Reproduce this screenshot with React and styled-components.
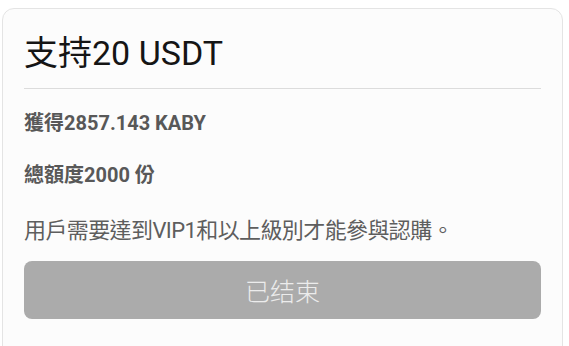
import React from 'react';
import styled, { createGlobalStyle } from 'styled-components';

const GlobalStyle = createGlobalStyle`
    html, body {
        margin: 0;
        padding: 0;
        background: #fff;
    }
    body {
        font-family: Roboto, "Noto Sans CJK TC", "Noto Sans CJK SC", sans-serif;
    }
`;

const App = () => {
    return (
        <>
            <GlobalStyle />
            <Page>
                <Card>
                    <Title>支持20 USDT</Title>
                    <Divider />
                    <Info top={20}>獲得2857.143 KABY</Info>
                    <Info top={24}>總額度2000 份</Info>
                    <Notice>用戶需要達到VIP1和以上級別才能參與認購。</Notice>
                    <EndedButton type="button" disabled>
                        已结束
                    </EndedButton>
                </Card>
            </Page>
        </>
    )
}

export default App;

// card wrapper

const Page = styled.div`
    padding: 8px 6px 0 2px;
    height: 346px;
    box-sizing: border-box;
    overflow: hidden;
`;

const Card = styled.div`
    background: #fcfcfc;
    border: 1px solid #e4e4e4;
    border-radius: 12px;
    padding: 22px 21px 40px;
    display: flex;
    flex-direction: column;
`;

const Title = styled.h2`
    margin: 0;
    font-size: 34px;
    line-height: 44px;
    font-weight: 400;
    color: #151515;
`;

const Divider = styled.div`
    height: 1px;
    background: #dcdcdc;
    margin-top: 13px;
`;

const Info = styled.div`
    margin-top: ${props => props.top}px;
    font-size: 20px;
    line-height: 28px;
    font-weight: 700;
    color: #585858;
`;

const Notice = styled.p`
    margin: 27px 0 0;
    font-size: 22px;
    line-height: 30px;
    font-weight: 400;
    color: #5e5e5e;
    letter-spacing: -0.6px;
`;

const EndedButton = styled.button`
    margin-top: 15px;
    height: 58px;
    border: none;
    border-radius: 8px;
    background: #ababab;
    color: #ececec;
    font-family: inherit;
    font-size: 25px;
    font-weight: 300;
    cursor: not-allowed;
`;
